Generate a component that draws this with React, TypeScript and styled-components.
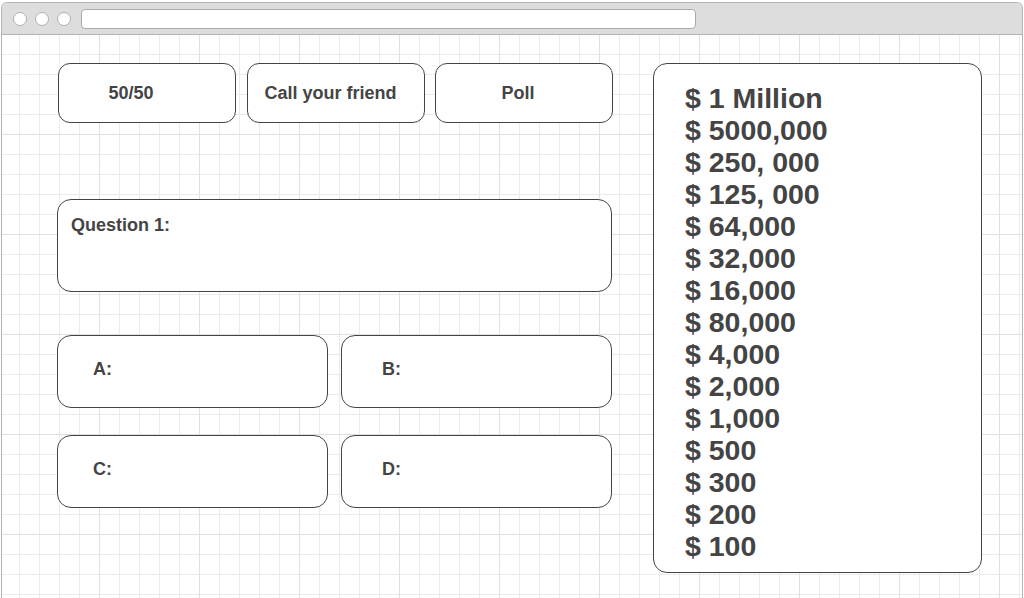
import React from "react";
import styled, { createGlobalStyle } from "styled-components";

const Global = createGlobalStyle`
  html, body { margin: 0; padding: 0; background: #ffffff; overflow: hidden; }
  body { font-family: "Liberation Sans", Arial, Helvetica, sans-serif; }
`;

const Window = styled.div`
  margin: 2px 1px 0 1px;
  height: 620px;
  border: 1px solid #b4b4b4;
  border-bottom: none;
  border-radius: 6px 6px 0 0;
  overflow: hidden;
  display: flex;
  flex-direction: column;
`;

const TitleBar = styled.div`
  height: 31px;
  background: #dddddd;
  border-bottom: 1px solid #b4b4b4;
  display: flex;
  align-items: center;
  padding-left: 11px;
  gap: 8px;
`;

const Dot = styled.span`
  width: 14px;
  height: 14px;
  border-radius: 50%;
  background: #ffffff;
  border: 1px solid #b0b0b0;
  box-sizing: border-box;
`;

const Url = styled.div`
  margin-left: 2px;
  width: 615px;
  height: 20px;
  box-sizing: border-box;
  background: #ffffff;
  border: 1px solid #aaaaaa;
  border-radius: 4px;
`;

const Canvas = styled.div`
  flex: 1;
  display: flex;
  align-items: flex-start;
  padding: 28px 0 0 55px;
  background-color: #ffffff;
  background-image:
    linear-gradient(to right, transparent 99px, #e0e0e0 99px, #e0e0e0 100px),
    linear-gradient(to bottom, transparent 99px, #e0e0e0 99px, #e0e0e0 100px),
    linear-gradient(to right, transparent 19px, #ebebeb 19px, #ebebeb 20px),
    linear-gradient(to bottom, transparent 19px, #ebebeb 19px, #ebebeb 20px);
  background-size: 100px 100px, 100px 100px, 20px 20px, 20px 20px;
  background-position: -2px 0, -2px 0, -2px 0, -2px 0;
`;

const LeftColumn = styled.div`
  width: 555px;
  display: flex;
  flex-direction: column;
`;

const LifelineRow = styled.div`
  display: grid;
  grid-template-columns: repeat(3, 178px);
  column-gap: 10.5px;
  padding-left: 1px;
`;

const Box = styled.div`
  box-sizing: border-box;
  background: #ffffff;
  border: 1px solid #444444;
  color: #444444;
  font-weight: 700;
  font-size: 18px;
`;

const Lifeline = styled(Box)<{ $shift: number }>`
  height: 60px;
  border-radius: 12px;
  display: flex;
  align-items: center;
  justify-content: center;
  padding-right: ${(p) => p.$shift}px;
`;

const Question = styled(Box)`
  margin-top: 76px;
  height: 93px;
  border-radius: 14px;
  padding: 15px 0 0 13px;
`;

const AnswerRow = styled.div<{ $top: number }>`
  margin-top: ${(p) => p.$top}px;
  display: grid;
  grid-template-columns: 271px 271px;
  column-gap: 13px;
`;

const Answer = styled(Box)<{ $indent: number }>`
  height: 73px;
  border-radius: 14px;
  display: flex;
  align-items: center;
  padding: 0 0 4px ${(p) => p.$indent}px;
`;

const Prizes = styled(Box)`
  margin-left: 41px;
  width: 329px;
  height: 510px;
  border-radius: 14px;
  padding: 18px 0 0 31px;
  font-size: 28.5px;
  line-height: 32px;
`;

const Prize = styled.div``;

const prizes = [
  "$ 1 Million",
  "$ 5000,000",
  "$ 250, 000",
  "$ 125, 000",
  "$ 64,000",
  "$ 32,000",
  "$ 16,000",
  "$ 80,000",
  "$ 4,000",
  "$ 2,000",
  "$ 1,000",
  "$ 500",
  "$ 300",
  "$ 200",
  "$ 100",
];

export default function App() {
  return (
    <>
      <Global />
      <Window>
        <TitleBar>
          <Dot />
          <Dot />
          <Dot />
          <Url />
        </TitleBar>
        <Canvas>
          <LeftColumn>
            <LifelineRow>
              <Lifeline $shift={32}>50/50</Lifeline>
              <Lifeline $shift={10}>Call your friend</Lifeline>
              <Lifeline $shift={12}>Poll</Lifeline>
            </LifelineRow>
            <Question>Question 1:</Question>
            <AnswerRow $top={43}>
              <Answer $indent={35}>A:</Answer>
              <Answer $indent={40}>B:</Answer>
            </AnswerRow>
            <AnswerRow $top={27}>
              <Answer $indent={35}>C:</Answer>
              <Answer $indent={40}>D:</Answer>
            </AnswerRow>
          </LeftColumn>
          <Prizes>
            {prizes.map((p) => (
              <Prize key={p}>{p}</Prize>
            ))}
          </Prizes>
        </Canvas>
      </Window>
    </>
  );
}
